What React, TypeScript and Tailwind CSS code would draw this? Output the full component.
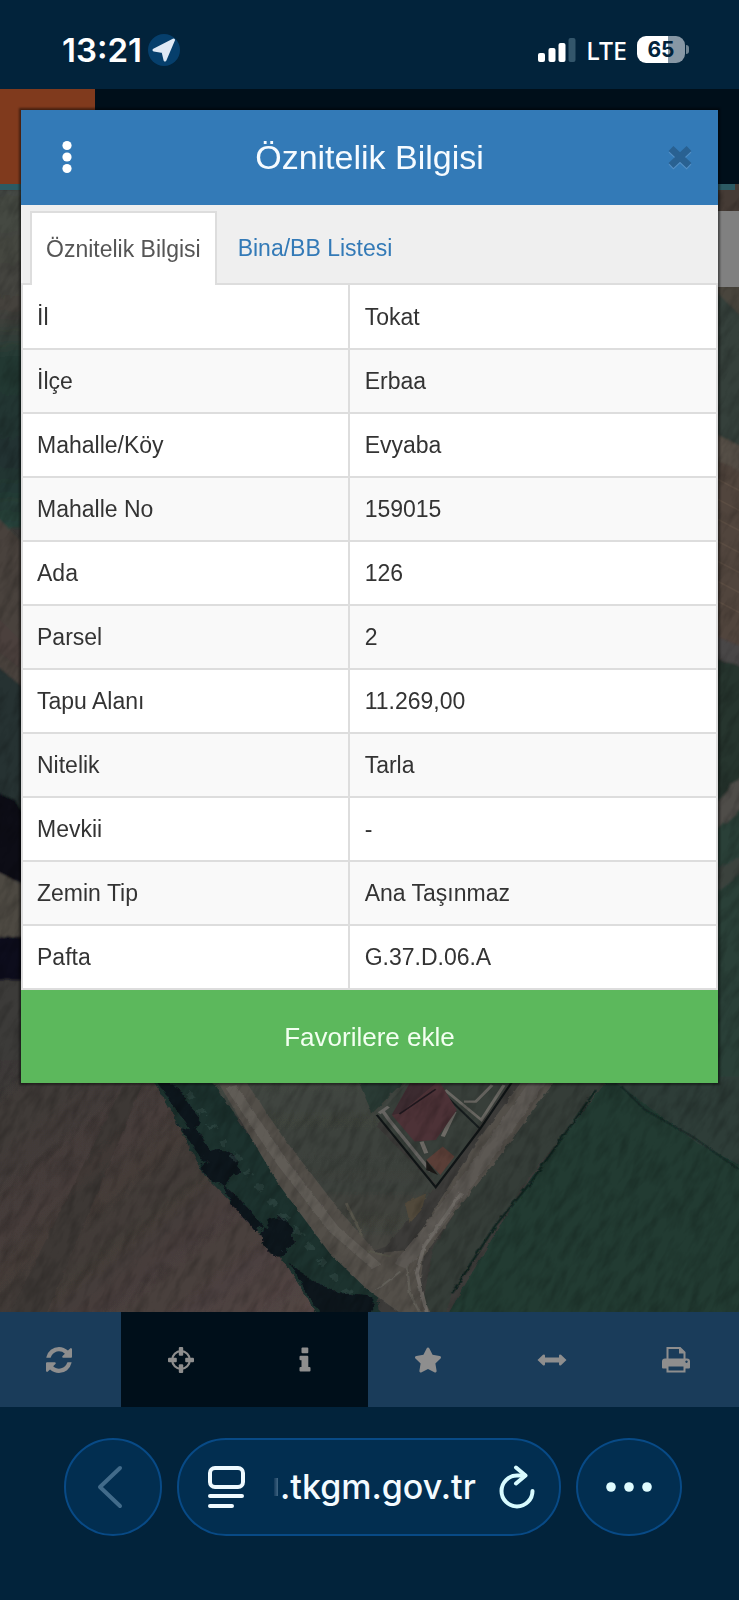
import type { ReactNode } from "react";
import { FaStar } from "react-icons/fa";

const ROWS: [string, string][] = [
  ["İl", "Tokat"],
  ["İlçe", "Erbaa"],
  ["Mahalle/Köy", "Evyaba"],
  ["Mahalle No", "159015"],
  ["Ada", "126"],
  ["Parsel", "2"],
  ["Tapu Alanı", "11.269,00"],
  ["Nitelik", "Tarla"],
  ["Mevkii", "-"],
  ["Zemin Tip", "Ana Taşınmaz"],
  ["Pafta", "G.37.D.06.A"],
];

function StatusBar() {
  return (
    <header className="flex h-[89px] items-center justify-between bg-[#02233b] pr-[50px] pl-[62px] pt-[10px] text-white">
      <div className="flex items-center gap-[6px]">
        <time className="font-['Inter',sans-serif] text-[33px] leading-[40px] font-semibold">13:21</time>
        <svg viewBox="0 0 32 32" className="size-[32px]" aria-hidden="true">
          <circle cx="16" cy="16" r="16" fill="#063f6c" />
          <path d="M25.500 6 L17 26 L15 17.500 L6 16 Z" fill="#dfe9f5" stroke="#dfe9f5" strokeWidth="3" strokeLinejoin="round" />
        </svg>
      </div>
      <div className="flex items-center gap-[10px]">
        <svg viewBox="0 0 38 24" className="h-[24px] w-[38px]" aria-hidden="true">
          <rect x="0" y="15" width="7" height="9" rx="2" fill="#fff" />
          <rect x="10.500" y="10" width="7" height="14" rx="2" fill="#fff" />
          <rect x="20.500" y="5" width="7" height="19" rx="2" fill="#fff" />
          <rect x="30.500" y="0" width="7" height="24" rx="2" fill="#33566b" />
        </svg>
        <span className="font-['Noto_Sans',sans-serif] text-[25px] leading-[32px] font-medium">LTE</span>
        <div className="flex items-center gap-[1px]">
          <span className="flex h-[27px] w-[48px] items-center justify-center rounded-[9px] bg-linear-to-r from-white from-65% to-[#8797a5] to-65% font-['Inter',sans-serif] text-[21px] leading-[26px] font-bold text-[#02233b]">
            65
          </span>
          <span className="h-[9px] w-[3px] rounded-r-full bg-[#6f8392]" />
        </div>
      </div>
    </header>
  );
}

function SatelliteMap() {
  return (
    <svg
      viewBox="0 184 739 1128"
      preserveAspectRatio="xMidYMax slice"
      className="absolute inset-0 size-full"
      role="img"
      aria-label="Uydu haritası"
    >
      <defs>
        <filter id="soft" x="-5%" y="-5%" width="110%" height="110%">
          <feTurbulence type="fractalNoise" baseFrequency="0.050" numOctaves="3" seed="4" result="n" />
          <feDisplacementMap in="SourceGraphic" in2="n" scale="8" />
          <feGaussianBlur stdDeviation="1.200" />
        </filter>
        <filter id="trees" x="-5%" y="-5%" width="110%" height="110%">
          <feTurbulence type="fractalNoise" baseFrequency="0.050" numOctaves="4" seed="9" result="n" />
          <feDisplacementMap in="SourceGraphic" in2="n" scale="26" />
          <feGaussianBlur stdDeviation="1.600" />
        </filter>
        <filter id="grain" x="0" y="0" width="100%" height="100%">
          <feTurbulence type="fractalNoise" baseFrequency="0.120 0.040" numOctaves="5" seed="2" />
          <feColorMatrix values="0 0 0 0 0  0 0 0 0 0  0 0 0 0 0  1.600 0 0 0 -0.650" />
        </filter>
        <linearGradient id="brown" x1="0" y1="0" x2="1" y2="1">
          <stop offset="0" stopColor="#3c3938" />
          <stop offset="0.350" stopColor="#463c3a" />
          <stop offset="0.500" stopColor="#423b38" />
          <stop offset="1" stopColor="#544645" />
        </linearGradient>
        <linearGradient id="middle" x1="0" y1="0" x2="0" y2="1">
          <stop offset="0" stopColor="#424641" />
          <stop offset="0.500" stopColor="#3b413b" />
          <stop offset="1" stopColor="#464540" />
        </linearGradient>
        <linearGradient id="left" x1="0" y1="0" x2="0" y2="1">
          <stop offset="0" stopColor="#454a44" />
          <stop offset="0.350" stopColor="#45433e" />
          <stop offset="0.500" stopColor="#233933" />
          <stop offset="0.800" stopColor="#203230" />
          <stop offset="1" stopColor="#29433b" />
        </linearGradient>
      </defs>

      <rect x="0" y="184" width="739" height="1128" fill="#3c3b39" />

      <g filter="url(#soft)">
        <rect x="-10" y="190" width="60" height="340" fill="url(#left)" />
        <path d="M-10 510 L50 570 V720 L-10 670Z" fill="#48423c" />
        <path d="M-10 610 L50 670 V690 L-10 645Z" fill="#4c3f3d" />
        <path d="M-10 660 L50 710 V860 H-10Z" fill="#263330" />
        <path d="M-10 790 L15 800 L40 850 V890 L-10 870Z" fill="#0a1019" />
        <path d="M-10 868 L40 895 V945 H-10Z" fill="#4e4842" />
        <path d="M-10 945 Q8 925 40 945 V980 H-10Z" fill="#0a111c" />

        <rect x="700" y="180" width="50" height="40" fill="#443b36" />
        <path d="M700 284 H750 V450 L700 430Z" fill="#35413b" />
        <path d="M700 276 H750 V325Z" fill="#4a453e" />
        <path d="M700 425 L750 452 V478 L700 452Z" fill="#575046" />
        <path d="M700 452 L750 478 V650 L700 630Z" fill="#51443d" />
        <path d="M700 630 L750 650 V670 L700 652Z" fill="#4a4746" />
        <path d="M700 655 L750 668 V770 L700 830Z" fill="#27342f" />
        <path d="M700 820 L750 768 V800 L700 846Z" fill="#504d49" />
        <path d="M700 846 L750 800 V1090 H700Z" fill="#2a4039" />
        <path d="M700 880 L750 850 V866 L700 904Z" fill="#3b423e" />
      </g>
      <g stroke="#6b5a4c" strokeWidth="1.500" opacity="0.400">
        <path d="M700 470 L750 496 M700 490 L750 516 M700 510 L750 536 M700 532 L750 558 M700 552 L750 578 M700 572 L750 598 M700 592 L750 618" />
      </g>

      <g transform="translate(0 1060) scale(0.471 0.333)">
        <g filter="url(#soft)">
          <path d="M-20 0 H360 L700 790 H-20Z" fill="url(#brown)" />
          <path d="M300 80 L90 790 L10 790 L260 80Z" fill="#34312f" opacity="0.400" />
          <path d="M430 60 H880 L800 200 L925 380 L820 560 L780 580Z" fill="url(#middle)" />
          <path d="M760 60 H860 L790 160Z" fill="#293a34" />
          <path d="M1290 60 H1590 V790 H940 L1060 500 L1130 350Z" fill="#203a33" />
          <path d="M1290 50 H1590 V330 L1480 250Z" fill="#2d3e38" />
          <path d="M1150 60 H1290 L1130 340 L960 700 L940 790 H890 L920 560Z" fill="#353d37" />
        </g>

        <path
          d="M325 60 H450 L540 250 L620 400 L710 560 L800 690 L810 800 H690 L610 620 L540 500 L430 340 L380 200Z"
          fill="#1b302e"
          filter="url(#trees)"
        />
        <g fill="#0d141c" filter="url(#trees)">
          <path d="M330 60 L375 80 L425 180 L410 230 L380 160Z" />
          <path d="M380 200 L420 210 L450 280 L430 300Z" />
          <ellipse cx="468" cy="320" rx="38" ry="50" />
          <path d="M470 370 L510 420 L560 500 L545 520 L490 430Z" />
          <ellipse cx="590" cy="530" rx="32" ry="58" />
          <path d="M615 610 L660 660 L720 700 L790 710 L795 800 H695Z" />
        </g>
        <g fill="none" stroke="#3c5752" strokeWidth="18" opacity="0.400" filter="url(#trees)" strokeDasharray="18 34">
          <path d="M400 100 L470 240 L550 380 L680 600 L740 700" />
        </g>

        <g filter="url(#soft)">
          <path d="M460 60 L520 60 L600 230 L720 450 L800 580 L870 570 L930 430 L1010 250 L1110 60 H1180 L1060 290 L960 470 L900 590 L890 690 L925 790 L880 790 L780 690 L700 580 L590 370Z" fill="#524f4a" />
          <path d="M490 80 L600 310 L710 510 L800 620" fill="none" stroke="#605c56" strokeWidth="24" />
          <path d="M1145 60 L1020 310 L920 500 L850 620" fill="none" stroke="#5c5853" strokeWidth="34" />
          <path d="M980 400 L900 560 L885 640 L910 780" fill="none" stroke="#6c6863" strokeWidth="8" />
          <path d="M865 620 L870 700 L895 770 M800 690 L850 635" fill="none" stroke="#625f59" strokeWidth="5" />
          <path d="M860 430 L905 400 L895 450 L870 490Z" fill="#51493a" />
          <path d="M780 575 L830 590 M735 430 L770 530" fill="none" stroke="#57544b" strokeWidth="6" />
        </g>

        <path d="M870 60 H1085 L1015 205 L930 380 L800 170Z" fill="#383f3a" />
        <path d="M800 165 L925 382 L1020 205 L1090 60" fill="none" stroke="#101516" strokeWidth="5" />
        <path d="M812 152 L826 180 L915 335 M805 160 L825 140" fill="none" stroke="#676562" strokeWidth="8" />
        <path d="M930 85 L1018 205" fill="none" stroke="#161c1d" strokeWidth="5" />
        <path d="M945 90 L1022 180 L1070 75 M985 125 L1010 125 L1045 75" fill="none" stroke="#696762" strokeWidth="7" />
        <path d="M895 245 L905 280 M940 230 L965 155" fill="none" stroke="#6f6c67" strokeWidth="9" />
        <path d="M870 70 L935 70 L970 150 L925 240 L880 245 L832 165Z" fill="#4d3237" />
        <path d="M832 165 L870 70 H925 L850 160Z" fill="#3c2b30" />
        <path d="M848 162 L925 88" stroke="#20181e" strokeWidth="4" />
        <path d="M905 300 L940 260 L965 290 L935 345Z" fill="#5a3e37" />
        <path d="M905 300 L930 345 L905 330Z" fill="#1b1917" />

        <g fill="none" stroke="#11231f" strokeWidth="5" filter="url(#soft)">
          <path d="M1265 90 L1180 260 L1125 370 L1050 500 L960 700" />
          <path d="M1320 80 L1370 150 L1470 230 L1570 330" opacity="0.600" />
        </g>
      </g>

      <g transform="rotate(28 370 750)">
        <rect x="-500" y="-100" width="1800" height="1800" filter="url(#grain)" opacity="0.260" />
      </g>
    </svg>
  );
}

function Dialog() {
  return (
    <section
      role="dialog"
      aria-labelledby="dialog-title"
      className="z-10 col-start-1 row-start-1 mx-[21px] mt-[21px] self-start bg-white font-['Liberation_Sans',Arial,sans-serif] shadow-[0_0_2px_2px_rgba(0,0,0,0.45)]"
    >
      <div className="grid h-[95px] grid-cols-[90px_1fr_90px] items-center bg-[#337ab7] pb-[2px] text-[#f6fbff]">
        <button type="button" aria-label="Menü" className="flex h-full items-center justify-center pl-[2px]">
          <svg viewBox="0 0 10 34" className="h-[34px] w-[10px] fill-white" aria-hidden="true">
            <circle cx="5" cy="5.500" r="4.600" />
            <circle cx="5" cy="17" r="4.600" />
            <circle cx="5" cy="28.500" r="4.600" />
          </svg>
        </button>
        <h1 id="dialog-title" className="text-center text-[34px] leading-[40px]">
          Öznitelik Bilgisi
        </h1>
        <button type="button" aria-label="Kapat" className="flex h-full items-center justify-center pl-[14px]">
          <svg viewBox="0 0 26 28" className="h-[28px] w-[26px]" aria-hidden="true">
            <g strokeWidth="7" fill="none">
              <path d="M4 7 L22 24 M22 7 L4 24" stroke="#5490c6" />
              <path d="M4 5.500 L22 22.500 M22 5.500 L4 22.500" stroke="#296192" />
            </g>
          </svg>
        </button>
      </div>

      <nav className="flex h-[80px] items-end border-b-2 border-[#ddd] bg-[#efefef] px-[9px] text-[23px] leading-[32px]">
        <a
          href="#oznitelik"
          aria-current="page"
          className="-mb-[2px] flex h-[74px] items-center border-2 border-b-0 border-[#ddd] bg-white px-[14px] pb-[1px] text-[#555]"
        >
          Öznitelik Bilgisi
        </a>
        <a href="#bina" className="flex h-[72px] items-center px-[21px] pt-[1px] text-[#337ab7]">
          Bina/BB Listesi
        </a>
      </nav>

      <table className="w-full table-fixed border-collapse text-[23px] leading-[32px] text-[#333]">
        <tbody>
          {ROWS.map(([label, value]) => (
            <tr key={label} className="h-[64px] odd:bg-white even:bg-[#f9f9f9]">
              <th scope="row" className="w-[47%] border-2 border-t-0 border-[#ddd] px-[14px] text-left font-normal">
                {label}
              </th>
              <td className="border-2 border-t-0 border-[#ddd] px-[15px]">{value}</td>
            </tr>
          ))}
        </tbody>
      </table>

      <button type="button" className="block h-[93px] w-full bg-[#5cb85c] text-[26px] leading-[32px] text-[#f2fff0]">
        Favorilere ekle
      </button>
    </section>
  );
}

function ToolButton({ label, dark = false, children }: { label: string; dark?: boolean; children: ReactNode }) {
  return (
    <button
      type="button"
      aria-label={label}
      className={`flex items-center justify-center pr-[3px] text-[#8e8e8e] ${dark ? "bg-[#000f1a]" : "bg-[#1a3c5a]"}`}
    >
      {children}
    </button>
  );
}

function Toolbar() {
  return (
    <div className="grid h-[95px] grid-cols-[121px_repeat(5,1fr)] bg-[#1a3c5a]" role="toolbar" aria-label="Harita araçları">
      <ToolButton label="Yenile">
        <svg viewBox="128 128 1536 1536" className="size-[26px]" fill="currentColor" aria-hidden="true">
          <path d="M1639 1056q0 5-1 7-64 268-268 434.500t-478 166.500q-146 0-282.500-55t-243.500-157l-129 129q-19 19-45 19t-45-19-19-45v-448q0-26 19-45t45-19h448q26 0 45 19t19 45-19 45l-137 137q71 66 161 102t187 36q134 0 250-65t186-179q11-17 53-117 8-23 30-23h192q13 0 22.500 9.500t9.500 22.500zm25-800v448q0 26-19 45t-45 19h-448q-26 0-45-19t-19-45 19-45l138-138q-148-137-349-137-134 0-250 65t-186 179q-11 17-53 117-8 23-30 23h-199q-13 0-22.500-9.500t-9.500-22.500v-7q65-268 270-434.500t480-166.500q146 0 284 55.500t245 156.500l130-129q19-19 45-19t45 19 19 45z" />
        </svg>
      </ToolButton>
      <ToolButton label="Konum" dark>
        <svg viewBox="0 0 26 26" className="size-[26px]" aria-hidden="true">
          <circle cx="13" cy="13" r="8.800" fill="none" stroke="currentColor" strokeWidth="2.200" />
          <g fill="currentColor">
            <rect x="10.800" y="0" width="4.400" height="8.800" rx="1" />
            <rect x="10.800" y="17.200" width="4.400" height="8.800" rx="1" />
            <rect x="0" y="10.800" width="8.800" height="4.400" rx="1" />
            <rect x="17.200" y="10.800" width="8.800" height="4.400" rx="1" />
          </g>
        </svg>
      </ToolButton>
      <ToolButton label="Bilgi" dark>
        <svg viewBox="0 0 12 26" className="h-[26px] w-[12px]" fill="currentColor" aria-hidden="true">
          <rect x="2.500" y="0.500" width="6.800" height="5.800" rx="1" />
          <path d="M1.500 8.800 H8.300 Q9.300 8.800 9.300 9.800 V20 H10.500 Q11.500 20 11.500 21 V23.500 Q11.500 24.500 10.500 24.500 H1.500 Q0.500 24.500 0.500 23.500 V21 Q0.500 20 1.500 20 H2.500 V13.200 H1.500 Q0.500 13.200 0.500 12.200 V9.800 Q0.500 8.800 1.500 8.800Z" />
        </svg>
      </ToolButton>
      <ToolButton label="Favoriler">
        <FaStar className="size-[28px]" aria-hidden="true" />
      </ToolButton>
      <ToolButton label="Ölçüm">
        <svg viewBox="0 0 30 14" className="h-[14px] w-[30px]" fill="currentColor" aria-hidden="true">
          <path d="M0.500 7 L6 1.800 Q7.600 0.800 8 2.500 V4.600 H22 V2.500 Q22.400 0.800 24 1.800 L29.500 7 L24 12.200 Q22.400 13.200 22 11.500 V9.400 H8 V11.500 Q7.600 13.200 6 12.200Z" />
        </svg>
      </ToolButton>
      <ToolButton label="Yazdır">
        <svg viewBox="0 0 28 28" className="size-[28px]" aria-hidden="true">
          <path d="M5.500 13 V2 H18 L22.500 6.500 V13" fill="none" stroke="currentColor" strokeWidth="2" />
          <path d="M17 1.500 L23 7.500 H17Z" fill="currentColor" />
          <path
            fillRule="evenodd"
            d="M3 12.500 H25 Q28 12.500 28 15.500 V21.500 Q28 22.500 27 22.500 H23.500 V26.500 H4.500 V22.500 H1 Q0 22.500 0 21.500 V15.500 Q0 12.500 3 12.500Z M6.500 20.500 V24.500 H21.500 V20.500Z M24.500 14.500 a1.200 1.200 0 1 0 0.010 0Z"
            fill="currentColor"
          />
        </svg>
      </ToolButton>
    </div>
  );
}

function BrowserBar() {
  return (
    <footer className="flex h-[193px] items-start gap-[15px] bg-[#02233b] px-[57px] pt-[31px] pl-[64px]">
      <button
        type="button"
        aria-label="Geri"
        className="flex h-[98px] w-[98px] shrink-0 items-center justify-center rounded-full border-2 border-[#084a86] bg-[#022e50] pr-[6px]"
      >
        <svg viewBox="0 0 26 44" className="h-[44px] w-[26px]" fill="none" aria-hidden="true">
          <path d="M23 3 L3 22 L23 41" stroke="#426b8a" strokeWidth="4" strokeLinecap="round" strokeLinejoin="round" />
        </svg>
      </button>
      <div className="flex h-[98px] flex-1 items-center rounded-full border-2 border-[#084a86] bg-[#022e50] pr-[24px] pl-[28px]">
        <button type="button" aria-label="Sayfa menüsü">
          <svg viewBox="0 0 38 44" className="h-[44px] w-[38px]" fill="none" stroke="#effaff" strokeWidth="4" strokeLinecap="round" aria-hidden="true">
            <rect x="3" y="3" width="33" height="19" rx="5" />
            <path d="M3 31 H35 M3 41 H25" />
          </svg>
        </button>
        <span className="ml-[29px] h-[18px] w-[4px] bg-linear-to-r from-[#12395a] to-[#426784]" />
        <span className="flex-1 pl-[2px] font-['Inter',sans-serif] text-[34px] leading-[40px] font-medium whitespace-nowrap text-[#f4fbff]">
          .tkgm.gov.tr
        </span>
        <button type="button" aria-label="Yenile">
          <svg viewBox="0 0 36 44" className="h-[44px] w-[36px]" fill="none" stroke="#d8fbff" strokeWidth="4" strokeLinecap="round" strokeLinejoin="round" aria-hidden="true">
            <path d="M26 10.500 H18 A15.500 15.500 0 1 0 33.500 26" />
            <path d="M17 2.500 L26.500 10.500 L17 18.500" />
          </svg>
        </button>
      </div>
      <button
        type="button"
        aria-label="Diğer"
        className="flex h-[98px] w-[106px] shrink-0 items-center justify-center rounded-[50%] border-2 border-[#084a86] bg-[#022e50]"
      >
        <svg viewBox="0 0 46 10" className="h-[10px] w-[46px] fill-[#e0fcff]" aria-hidden="true">
          <circle cx="5" cy="5" r="4.800" />
          <circle cx="23" cy="5" r="4.800" />
          <circle cx="41" cy="5" r="4.800" />
        </svg>
      </button>
    </footer>
  );
}

export default function App() {
  return (
    <div className="flex min-h-screen flex-col bg-[#02233b]">
      <StatusBar />
      <main className="grid flex-1">
        <div className="col-start-1 row-start-1 flex flex-col">
          <div className="h-[95px] bg-[#000f1a]">
            <div className="h-full w-[95px] bg-[#803a1d]" />
          </div>
          <div className="relative flex-1 overflow-hidden">
            <SatelliteMap />
            <div className="relative mr-[4px] h-[6px] bg-[#2c5a63]" />
            <div className="relative mt-[21px] ml-auto h-[76px] w-[60px] bg-[#808080]" />
          </div>
        </div>
        <Dialog />
      </main>
      <Toolbar />
      <BrowserBar />
    </div>
  );
}
